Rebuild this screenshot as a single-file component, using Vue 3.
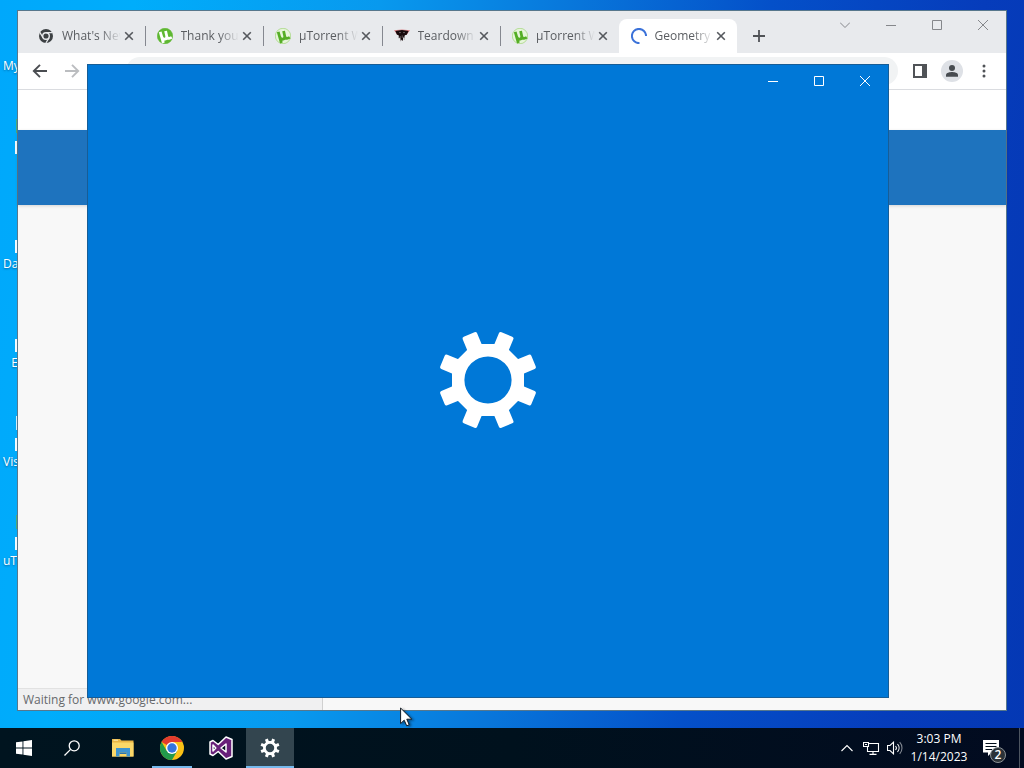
<script setup>
    import { ref } from 'vue';

    const shortcuts = [
        { label: 'My' },
        { label: '', badge: true, icon: 'olive' },
        { label: 'Da', badge: true },
        { label: 'E', badge: true },
        { label: 'Vis', badge: true, icon: 'paper' },
        { label: 'uTo', badge: true, icon: 'olive' },
    ];

    const tabs = [
        { title: "What's New", icon: 'chrome' },
        { title: 'Thank you', icon: 'utorrent' },
        { title: 'µTorrent W', icon: 'utorrent' },
        { title: 'Teardown', icon: 'teardown' },
        { title: 'µTorrent W', icon: 'utorrent' },
        { title: 'Geometry', icon: 'loading' },
    ];

    const activeTab = ref(5);
    const address = ref('');
    const teeth = [22.5, 67.5, 112.5, 157.5, 202.5, 247.5, 292.5, 337.5];
</script>

<template>
    <div class="desktop">
        <main class="workspace">
            <ul class="shortcuts">
                <li v-for="(item, index) in shortcuts" :key="index" class="shortcut">
                    <span class="shortcut-icon" :class="item.icon"></span>
                    <span class="shortcut-badge" :class="{ shown: item.badge }"></span>
                    <span class="shortcut-label">{{ item.label }}</span>
                </li>
            </ul>

            <section class="browser">
                <header class="tab-strip">
                    <div class="tabs">
                        <div v-for="(tab, index) in tabs" :key="index" class="tab" :class="{ active: index === activeTab }" @click="activeTab = index">
                            <svg v-if="tab.icon === 'chrome'" class="favicon" viewBox="0 0 16 16">
                                <circle cx="8" cy="8" r="7" fill="#3c4043" />
                                <circle cx="8" cy="8" r="3.3" fill="#3c4043" stroke="#e8eaed" stroke-width="1.4" />
                                <path d="M8 4.6H14.4M5 9.8L1.9 4.4M11 9.8L7.9 15" stroke="#e8eaed" stroke-width="1.3" fill="none" />
                            </svg>
                            <svg v-else-if="tab.icon === 'utorrent'" class="favicon" viewBox="0 0 16 16">
                                <circle cx="8" cy="8" r="7.7" :fill="index === 1 ? '#5fb832' : '#e6f5da'" :stroke="index === 1 ? '#5fb832' : '#93d067'" stroke-width=".6" />
                                <path d="M3.2 3.8L6.4 15M4.9 9.2C6 12.4 10.4 11.6 9.7 8L8.6 3M9.7 8C10.4 10.8 12.4 10.8 14.8 9.4" fill="none" :stroke="index === 1 ? '#fff' : '#55ae25'" stroke-width="2.8" />
                            </svg>
                            <svg v-else-if="tab.icon === 'teardown'" class="favicon" viewBox="0 0 16 16">
                                <path d="M0 2.3L8 1.5L16 2.3L12.5 7L3.5 7Z" fill="#d98286" />
                                <path d="M1.4 3L8 2L14.6 3L12.7 6.7L10.8 7.2L10.4 10L9.2 9.3L8.8 13L7.4 11.5L6.9 13.4L6.1 9.6L4.7 10.2L4.8 7.6L2.8 6.4Z" fill="#17090b" />
                                <path d="M6.2 8V11M8.2 7.4V10M10.3 8V12M5 4.6H7M9 4.6H11" stroke="#9b9091" stroke-width=".6" />
                            </svg>
                            <svg v-else class="favicon" viewBox="0 0 16 16">
                                <path d="M8.5 15.1A7.1 7.1 0 1 1 15.1 8" fill="none" stroke="#3b72d9" stroke-width="2" />
                            </svg>
                            <span class="tab-title">{{ tab.title }}</span>
                            <button class="tab-close" aria-label="Close tab">
                                <svg width="10" height="10" viewBox="0 0 10 10"><path d="M1.2 1.2L8.8 8.8M8.8 1.2L1.2 8.8" stroke="#55585d" stroke-width="1.6" /></svg>
                            </button>
                        </div>
                    </div>
                    <button class="new-tab" aria-label="New tab">
                        <svg width="12" height="12" viewBox="0 0 12 12"><path d="M6 0V12M0 6H12" stroke="#505357" stroke-width="1.8" /></svg>
                    </button>
                    <div class="window-controls">
                        <button aria-label="Search tabs"><svg width="10" height="10" viewBox="0 0 10 10"><path d="M0 2.5L5 7.5L10 2.5" /></svg></button>
                        <button aria-label="Minimize"><svg width="10" height="10" viewBox="0 0 10 10"><path d="M0 5.5H10" /></svg></button>
                        <button aria-label="Maximize"><svg width="10" height="10" viewBox="0 0 10 10"><path d="M.5 .5H9.5V9.5H.5Z" /></svg></button>
                        <button aria-label="Close"><svg width="10" height="10" viewBox="0 0 10 10"><path d="M0 0L10 10M10 0L0 10" /></svg></button>
                    </div>
                </header>

                <div class="toolbar">
                    <button aria-label="Back">
                        <svg width="16" height="16" viewBox="0 0 16 16"><path d="M15 8H2M8 1.8L1.8 8L8 14.2" fill="none" stroke="#4a4d51" stroke-width="1.9" /></svg>
                    </button>
                    <button aria-label="Forward">
                        <svg width="16" height="16" viewBox="0 0 16 16"><path d="M1 8H14M8 1.8L14.2 8L8 14.2" fill="none" stroke="#bbbdc0" stroke-width="1.9" /></svg>
                    </button>
                    <button aria-label="Stop loading"></button>
                    <input v-model="address" class="address" type="text" aria-label="Address">
                    <button aria-label="Side panel">
                        <svg width="14" height="14" viewBox="0 0 14 14"><path d="M1 1H13V13H1Z" fill="none" stroke="#505357" stroke-width="2" /><path d="M9 0H14V14H9Z" fill="#505357" /></svg>
                    </button>
                    <button aria-label="Profile">
                        <svg width="22" height="22" viewBox="0 0 22 22"><circle cx="11" cy="11" r="11" fill="#dee1e6" /><circle cx="11" cy="8" r="3" fill="#474b50" /><path d="M5 16.8V15C5 12.8 8.8 12 11 12S17 12.8 17 15V16.8Z" fill="#474b50" /></svg>
                    </button>
                    <button aria-label="Menu">
                        <svg width="4" height="14" viewBox="0 0 4 14" fill="#505357"><circle cx="2" cy="2" r="1.5" /><circle cx="2" cy="7" r="1.5" /><circle cx="2" cy="12" r="1.5" /></svg>
                    </button>
                </div>

                <div class="page">
                    <div class="page-banner"></div>
                </div>
                <div class="status">Waiting for www.google.com...</div>
            </section>

            <section class="settings">
                <div class="window-controls light">
                    <button aria-label="Minimize"><svg width="10" height="10" viewBox="0 0 10 10"><path d="M0 5.5H10" /></svg></button>
                    <button aria-label="Maximize"><svg width="10" height="10" viewBox="0 0 10 10"><path d="M.5 .5H9.5V9.5H.5Z" /></svg></button>
                    <button aria-label="Close"><svg width="10" height="10" viewBox="0 0 10 10"><path d="M0 0L10 10M10 0L0 10" /></svg></button>
                </div>
                <div class="splash">
                    <svg width="100" height="100" viewBox="-50 -50 100 100" fill="#fff">
                        <path fill-rule="evenodd" d="M-14.9 -36H14.9L36 -14.9V14.9L14.9 36H-14.9L-36 14.9V-14.9ZM23.6 0A23.6 23.6 0 1 0 -23.6 0A23.6 23.6 0 1 0 23.6 0Z" />
                        <rect v-for="angle in teeth" :key="angle" x="-7.8" y="-49.3" width="15.6" height="20" rx="2" :transform="`rotate(${angle})`" />
                    </svg>
                </div>
            </section>

            <svg class="cursor" width="13" height="20" viewBox="0 0 13 20">
                <path d="M.6 1V16.6L4.2 13.2L6.7 18.8L9.2 17.7L6.8 12.2H11.8Z" fill="#fff" stroke="#101820" stroke-width="1" />
            </svg>
        </main>

        <footer class="taskbar">
            <button class="task" aria-label="Start">
                <svg width="16" height="16" viewBox="0 0 16 16" fill="#fff"><path d="M0 2.3L6.5 1.4V7.5H0ZM7.4 1.2L16 0V7.5H7.4ZM0 8.4H6.5V14.6L0 13.7ZM7.4 8.4H16V16L7.4 14.8Z" /></svg>
            </button>
            <button class="task" aria-label="Search">
                <svg width="16" height="16" viewBox="0 0 16 16" fill="none" stroke="#fff" stroke-width="1.3"><circle cx="10.2" cy="5.8" r="5" /><path d="M6.6 9.4L.5 15.5" /></svg>
            </button>
            <div class="apps">
                <button class="task" aria-label="File Explorer">
                    <svg width="22" height="18" viewBox="0 0 22 18">
                        <path d="M0 0H8L9.5 1.5H21.5V17.5H0Z" fill="#e9b646" />
                        <path d="M0 3.5H21.5V17.5H0Z" fill="#fbd869" />
                        <path d="M1.5 1.2H6" stroke="#fff0b5" />
                        <path d="M4 9H18V17.5H14.5V13.5H7.5V17.5H4Z" fill="#3e94d1" />
                        <path d="M7.5 13.5H14.5V15H7.5Z" fill="#2b75ad" />
                    </svg>
                </button>
                <button class="task open" aria-label="Google Chrome">
                    <svg width="24" height="24" viewBox="0 0 24 24">
                        <circle cx="12" cy="12" r="12" fill="#fbc116" />
                        <path d="M12 12L1.6 6A12 12 0 0 1 22.4 6H12Z" fill="#e33b2e" />
                        <path d="M12 12L6.8 15L1.6 6A12 12 0 0 0 12 24L17.2 15Z" fill="#229a4b" />
                        <circle cx="12" cy="12" r="6" fill="#fff" />
                        <circle cx="12" cy="12" r="4.7" fill="#3475df" />
                    </svg>
                </button>
                <button class="task" aria-label="Visual Studio">
                    <svg width="24" height="24" viewBox="0 0 24 24">
                        <path fill-rule="evenodd" d="M17 1L23 3.5V20.5L17 23L9.2 15.5L4 19.5L1 18V6L4 4.5L9.2 8.5ZM17 8L12 12L17 16ZM4 9V15L6.8 12Z" fill="#682079" stroke="#fff" stroke-width="1.5" stroke-linejoin="round" />
                    </svg>
                </button>
                <button class="task current" aria-label="Settings">
                    <svg width="20" height="20" viewBox="-52 -52 104 104" fill="#fff">
                        <path fill-rule="evenodd" d="M-14.9 -36H14.9L36 -14.9V14.9L14.9 36H-14.9L-36 14.9V-14.9ZM22 0A22 22 0 1 0 -22 0A22 22 0 1 0 22 0Z" />
                        <rect v-for="angle in teeth" :key="angle" x="-7.8" y="-50" width="15.6" height="20" :transform="`rotate(${angle})`" />
                    </svg>
                </button>
            </div>
            <div class="tray">
                <button class="tray-icon" aria-label="Show hidden icons">
                    <svg width="12" height="8" viewBox="0 0 12 8"><path d="M.5 7L6 1.5L11.5 7" /></svg>
                </button>
                <button class="tray-icon" aria-label="Network">
                    <svg width="17" height="14" viewBox="0 0 17 14"><path d="M6 2.5H15.5V10.5H4.5V6M10 10.5V13M6.5 13.4H13.5M.5 1.5H5.5V5.5H.5ZM2 3.5H4" /></svg>
                </button>
                <button class="tray-icon" aria-label="Volume">
                    <svg width="16" height="14" viewBox="0 0 16 14"><path d="M.5 4.5H3L6.5 1.2V12.8L3 9.5H.5ZM8.5 5A3 3 0 0 1 8.5 9M10.5 3A6 6 0 0 1 10.5 11" /><path d="M12.7 1.2A8.5 8.5 0 0 1 12.7 12.8" opacity=".5" /></svg>
                </button>
                <button class="clock"><span>3:03 PM</span><span>1/14/2023</span></button>
                <button class="notifications" aria-label="Notifications">
                    <svg width="16" height="16" viewBox="0 0 16 16"><path d="M0 0H16V12.5H8.5L5 16V12.5H0Z" fill="#fff" /><path d="M2.5 3.5H13.5M2.5 6.5H13.5M2.5 9.5H9" stroke="#020e1b" /></svg>
                    <span class="count">2</span>
                </button>
                <button class="show-desktop" aria-label="Show desktop"></button>
            </div>
        </footer>
    </div>
</template>

<style>
    html, body {
        height: 100%;
        margin: 0;
    }
</style>

<style scoped>
    .desktop {
        height: 100vh;
        display: flex;
        flex-direction: column;
        overflow: hidden;
        font-family: "Open Sans", "Noto Sans", sans-serif;
        font-size: 12px;
        line-height: 16px;
        background: linear-gradient(97deg, #00a8fb 0%, #00adfb 12%, #0899ee 34%, #0875da 52%, #0450c9 69%, #063cbb 88%, #0438b4 100%);
    }
    button {
        display: flex;
        align-items: center;
        justify-content: center;
        padding: 0;
        border: 0;
        background: none;
        color: inherit;
        font: inherit;
    }
    .workspace {
        flex: 1;
        position: relative;
    }
    .shortcuts {
        width: 18px;
        margin: 0;
        padding: 6px 0 0;
        list-style: none;
    }
    .shortcut {
        height: 99px;
        display: flex;
        flex-direction: column;
        align-items: flex-end;
        color: #fff;
    }
    .shortcut-icon {
        width: 2px;
        height: 14px;
        margin-top: 14px;
    }
    .shortcut-icon.olive {
        background: #4caa78;
    }
    .shortcut-icon.paper {
        background: #d3eefa;
    }
    .shortcut-badge {
        width: 3px;
        height: 13px;
        margin: 8px 0 3px;
    }
    .shortcut-badge.shown {
        background: #f4fafd;
    }
    .shortcut-label {
        max-width: 15px;
        white-space: nowrap;
        text-shadow: 0 1px 2px rgba(0, 40, 80, .5);
    }

    .browser {
        position: absolute;
        inset: 10px 17px 17px 17px;
        display: flex;
        flex-direction: column;
        border: 1px solid #57778c;
        background: #fff;
    }
    .tab-strip {
        height: 42px;
        display: flex;
        align-items: flex-end;
        background: #e8eaed;
    }
    .tabs {
        width: 711px;
        display: flex;
        margin-left: 8px;
    }
    .tab {
        flex: 1;
        min-width: 0;
        height: 34px;
        box-sizing: border-box;
        display: flex;
        align-items: center;
        padding: 0 8px 0 12px;
        position: relative;
        color: #5a5d61;
    }
    .tab + .tab:not(.active)::before {
        content: "";
        position: absolute;
        left: 0;
        top: 7px;
        width: 1px;
        height: 20px;
        background: #858890;
    }
    .tab.active {
        background: #fff;
        border-radius: 8px 8px 0 0;
    }
    .favicon {
        flex: none;
        width: 16px;
        height: 16px;
        margin-right: 8px;
    }
    .tab-title {
        flex: 1;
        min-width: 0;
        overflow: hidden;
        white-space: nowrap;
        mask-image: linear-gradient(90deg, #000 65%, transparent);
    }
    .tab-close {
        flex: none;
        width: 16px;
        height: 16px;
    }
    .new-tab {
        width: 28px;
        height: 34px;
        margin-left: 8px;
    }
    .window-controls {
        display: flex;
        align-self: flex-start;
        margin-left: auto;
    }
    .window-controls button {
        width: 46px;
        height: 28px;
    }
    .window-controls path {
        fill: none;
        stroke: #85878b;
        stroke-width: 1;
    }
    .toolbar {
        height: 36px;
        display: flex;
        align-items: center;
        padding: 0 6px;
        border-bottom: 1px solid #dadce0;
    }
    .toolbar button {
        width: 32px;
        height: 28px;
    }
    .address {
        flex: 1;
        min-width: 0;
        height: 28px;
        box-sizing: border-box;
        margin: 0 6px;
        padding: 0 14px;
        border: 0;
        border-radius: 14px;
        background: #f1f3f4;
    }
    .page {
        flex: 1;
        padding-top: 40px;
        background: linear-gradient(#fff 40px, #f8f8f8 40px);
    }
    .page-banner {
        height: 75px;
        background: #1e73be;
        box-shadow: 0 1px 3px rgba(0, 0, 0, .15);
    }
    .status {
        position: absolute;
        left: 0;
        bottom: 0;
        width: 305px;
        height: 22px;
        box-sizing: border-box;
        padding: 3px 5px;
        border-top: 1px solid #e2e2e2;
        border-right: 1px solid #d0d0d0;
        background: #f0f0f1;
        color: #66696c;
    }

    .settings {
        position: absolute;
        inset: 64px 135px 30px 87px;
        display: flex;
        flex-direction: column;
        border: 1px solid #175d96;
        background: #0078d7;
    }
    .light button {
        height: 32px;
    }
    .light path {
        stroke: #fff;
    }
    .splash {
        flex: 1;
        display: flex;
        align-items: center;
        justify-content: center;
        padding-bottom: 34px;
    }
    .cursor {
        position: absolute;
        left: 400px;
        top: 707px;
        filter: drop-shadow(2px 1px 1px rgba(0, 0, 0, .4));
    }

    .taskbar {
        height: 40px;
        display: flex;
        background: linear-gradient(90deg, #00141f, #00111d 50%, #020b20);
        color: #fff;
    }
    .task {
        width: 48px;
        height: 40px;
        box-sizing: border-box;
        position: relative;
    }
    .apps {
        display: flex;
        gap: 1px;
        margin-left: 3px;
    }
    .task.open::after, .task.current::after {
        content: "";
        position: absolute;
        bottom: 0;
        left: 4px;
        right: 4px;
        height: 2px;
        background: #76b9ed;
    }
    .task.current {
        background: #33454f;
    }
    .task.current::after {
        left: 0;
        right: 0;
    }
    .tray {
        display: flex;
        margin-left: auto;
    }
    .tray-icon {
        width: 24px;
    }
    .tray-icon path {
        fill: none;
        stroke: #fff;
        stroke-width: 1.1;
    }
    .clock {
        width: 64px;
        flex-direction: column;
        line-height: 18px;
    }
    .notifications {
        width: 48px;
        padding-right: 8px;
        position: relative;
    }
    .count {
        position: absolute;
        left: 19px;
        top: 19px;
        width: 14px;
        height: 14px;
        border: 1px solid #8c9296;
        border-radius: 50%;
        background: #2b3238;
        font-weight: 600;
        line-height: 14px;
        text-align: center;
    }
    .show-desktop {
        width: 5px;
        border-left: 1px solid #4d5560;
    }
</style>
